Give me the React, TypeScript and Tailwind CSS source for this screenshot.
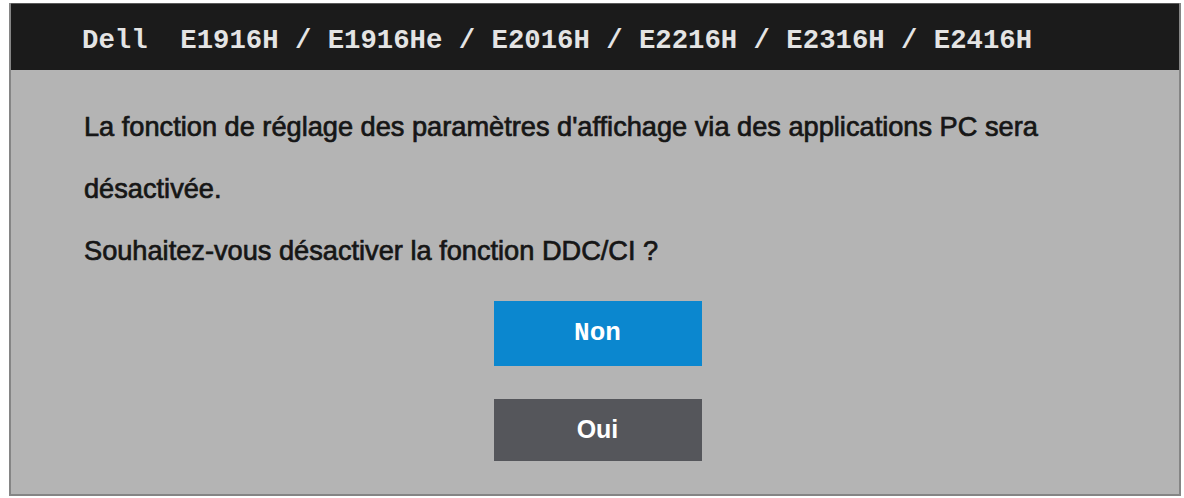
import React from 'react';

const mono = { fontFamily: '"Liberation Mono", "Courier New", monospace' };
const sans = { fontFamily: '"Liberation Sans", Arial, sans-serif' };

function OsdButton({ label, active }: { label: string; active?: boolean }) {
  return (
    <button
      style={active ? mono : sans}
      className={`w-[208px] flex items-center justify-center font-bold text-white ${
        active ? 'h-[65px] bg-[#0b87cf] text-[26px]' : 'h-[62px] bg-[#55565b] text-[25px]'
      }`}
    >
      {label}
    </button>
  );
}

export default function App() {
  return (
    <div className="w-[1184px] h-[498px] bg-white pt-[3px] pl-[9px] pr-[3px]">
      <div className="h-[493px] flex flex-col bg-[#b4b4b4] border-2 border-t-0 border-[#858585]">
        {/* model strip */}
        <div className="h-[67px] shrink-0 bg-[#1b1b1b] border-t border-[#5a5a5a] flex items-center pl-[71px] pt-[8px]">
          <span style={mono} className="text-[27.3px] font-bold text-[#e4e4e4] whitespace-pre leading-none">
            {'Dell  E1916H / E1916He / E2016H / E2216H / E2316H / E2416H'}
          </span>
        </div>

        {/* prompt */}
        <div style={sans} className="pl-[73px] pt-[26px] text-[27.2px] font-normal text-[#161616] leading-[62px] [-webkit-text-stroke:0.7px_#161616]">
          <p>La fonction de réglage des paramètres d'affichage via des applications PC sera</p>
          <p>désactivée.</p>
          <p>Souhaitez-vous désactiver la fonction DDC/CI ?</p>
        </div>

        <div className="flex flex-col items-center gap-[33px] mt-[19px] pl-[5px]">
          <OsdButton label="Non" active />
          <OsdButton label="Oui" />
        </div>
      </div>
    </div>
  );
}
